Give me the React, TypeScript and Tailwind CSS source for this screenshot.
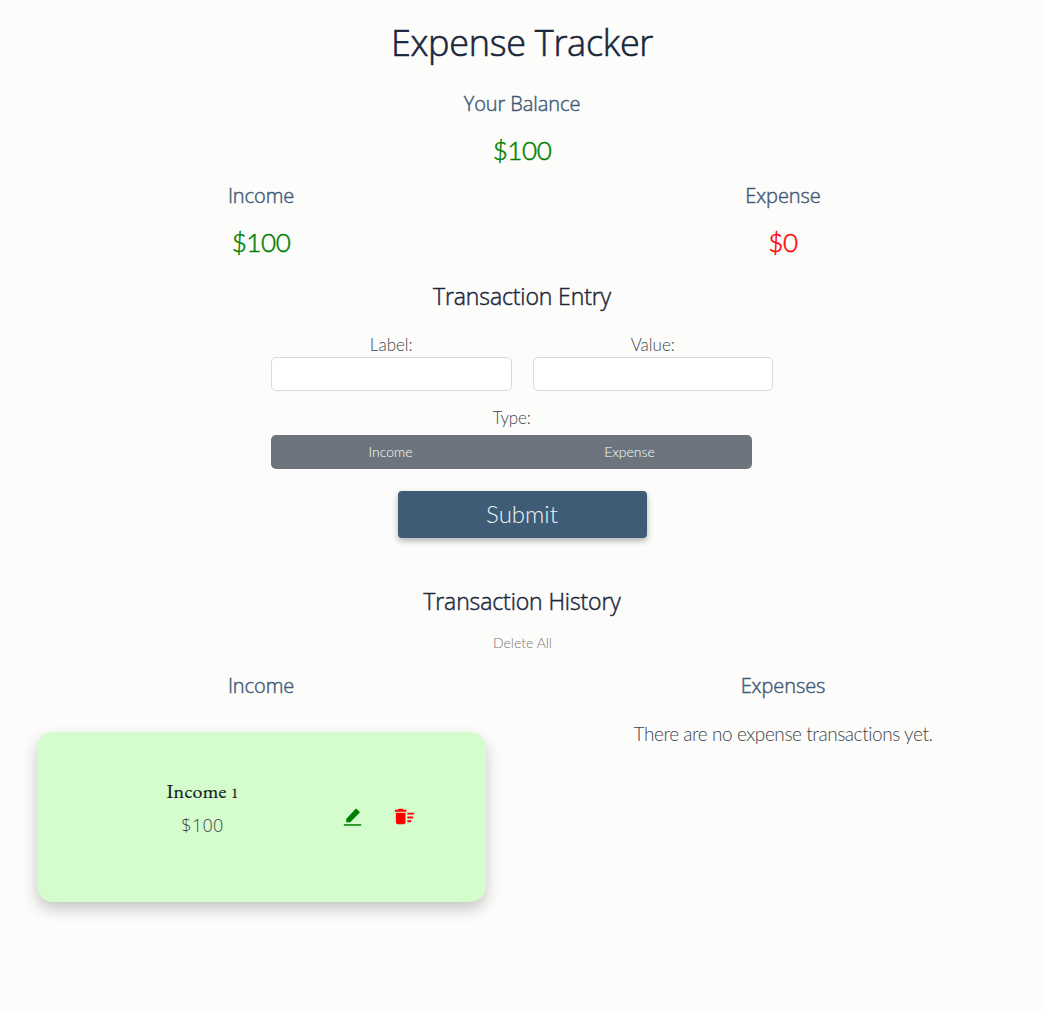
import { MdDeleteSweep } from "react-icons/md";

function SectionTitle({ children, className = "" }: { children: string; className?: string }) {
  return (
    <h2 className={`text-center font-['Open_Sans',sans-serif] text-[23px] leading-8 font-light tracking-[-0.12px] text-[#1b263b] [-webkit-text-stroke:0.45px_#1b263b] ${className}`}>
      <span>{children}</span>
    </h2>
  );
}

function SubTitle({ children, className = "" }: { children: string; className?: string }) {
  return (
    <h3 className={`text-center font-['Open_Sans',sans-serif] text-[20px] leading-6 font-light tracking-[-0.08px] text-[#415a77] [-webkit-text-stroke:0.45px_#415a77] ${className}`}>
      <span>{children}</span>
    </h3>
  );
}

function Amount({ value, tone }: { value: string; tone: string }) {
  return (
    <p className={`mt-[22px] text-center text-[26px] leading-6 font-light tracking-[-0.4px] [-webkit-text-stroke:0.5px_currentColor] ${tone}`}>
      <span>{value}</span>
    </p>
  );
}

function Field({ label }: { label: string }) {
  return (
    <label className="flex flex-1 flex-col text-center text-[17px] leading-6 font-light">
      <span>{label}</span>
      <input className="h-[34px] w-full rounded-[5px] border border-[#d7dade] bg-white px-3 outline-none" />
    </label>
  );
}

function EditIcon({ className }: { className?: string }) {
  return (
    <svg viewBox="0 0 20 20" className={className} fill="currentColor" aria-hidden="true">
      <path d="M4.2 15.2v-3.1L13.2 2.2c.5-.5 1.2-.5 1.7 0l2.5 2.2c.5.5.5 1.1 0 1.6L8.2 15.2Z" />
      <path d="M1.8 17h17.4v1.9H1.8z" opacity=".8" />
    </svg>
  );
}

export default function App() {
  return (
    <main className="min-h-screen bg-[#fcfcfa] pt-[23px] font-['Lato',sans-serif] font-light text-[#3d444a]">
      <h1 className="text-center font-['Open_Sans',sans-serif] text-[36px] leading-10 font-light tracking-[-0.28px] text-[#1b263b] [-webkit-text-stroke:0.6px_#1b263b]">
        <span>Expense Tracker</span>
      </h1>
      <section className="mt-[29px]">
        <SubTitle>Your Balance</SubTitle>
        <Amount value="$100" tone="text-[#008000]" />
      </section>
      <section className="mt-[22px] grid grid-cols-2">
        <div>
          <SubTitle>Income</SubTitle>
          <Amount value="$100" tone="text-[#008000]" />
        </div>
        <div>
          <SubTitle>Expense</SubTitle>
          <Amount value="$0" tone="text-[#ff0000]" />
        </div>
      </section>

      <SectionTitle className="mt-[26px]">Transaction Entry</SectionTitle>
      <form className="mx-auto mt-[21px] w-[502px]" onSubmit={(e) => e.preventDefault()}>
        <div className="flex gap-[21px]">
          <Field label="Label:" />
          <Field label="Value:" />
        </div>
        <div className="mt-[15px] w-[481px]">
          <p className="text-center text-[17px] leading-6 tracking-[-0.2px]"><span>Type:</span></p>
          <div className="mt-[5px] grid h-[34px] grid-cols-2 rounded-[5px] bg-[#6c757d] pr-[3px] text-sm text-white">
            <button type="button"><span>Income</span></button>
            <button type="button"><span>Expense</span></button>
          </div>
        </div>
        <button className="mx-auto mt-[22px] block h-[47px] w-[249px] rounded bg-[#3e5c76] pb-0.5 text-2xl text-[#f0f4f5] shadow-[0_3px_6px_rgba(0,0,0,0.3)]">
          <span>Submit</span>
        </button>
      </form>

      <SectionTitle className="mt-[47px]">Transaction History</SectionTitle>
      <button className="mx-auto mt-3.5 block pl-px text-sm leading-6 text-[#777]"><span>Delete All</span></button>
      <section className="mt-[19px] grid grid-cols-2">
        <div>
          <SubTitle>Income</SubTitle>
          <article className="mt-[33.5px] ml-[37px] flex h-[170px] w-[449px] rounded-2xl bg-[#d4fccd] shadow-[0_7px_15px_rgba(0,0,0,0.22)]">
            <div className="w-[331px] pt-[47.5px] text-center">
              <h4 className="h-6 font-['EB_Garamond',serif] text-[20px] leading-6 tracking-[0.3px] text-[#102018] [-webkit-text-stroke:0.2px_#102018]"><span>Income </span><span className="inline-block text-[15px] leading-none">1</span></h4>
              <p className="mt-2.5 font-['Open_Sans',sans-serif] text-[18px] leading-6 font-light tracking-[0.3px]"><span>$100</span></p>
            </div>
            <div className="-ml-[26px] flex items-start gap-[31px] pt-[73.5px]">
              <EditIcon className="mt-[1.5px] size-5 text-[#008000]" />
              <MdDeleteSweep className="size-[23px] text-[#ff0000]" />
            </div>
          </article>
        </div>
        <div>
          <SubTitle>Expenses</SubTitle>
          <p className="mt-6 text-center text-[19px] leading-6 tracking-[-0.43px]"><span>There are no expense transactions yet.</span></p>
        </div>
      </section>
    </main>
  );
}
